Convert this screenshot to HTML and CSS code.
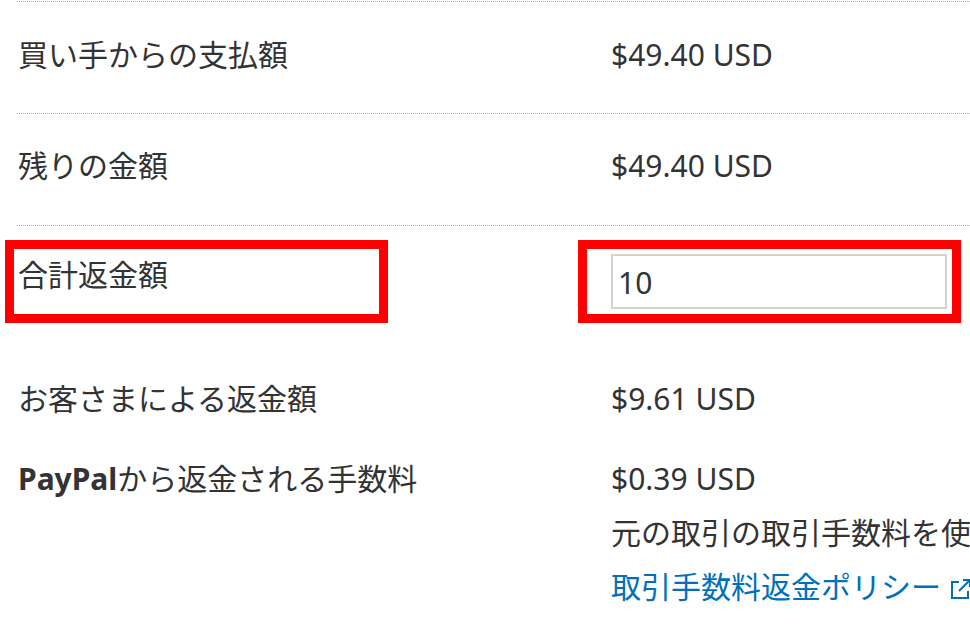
FILE: index.html
```html
<!DOCTYPE html>
<html lang="ja">
<head>
<meta charset="utf-8">
<title>返金</title>
<link rel="stylesheet" href="styles.css">
</head>
<body>
<div class="sheet">
  <div class="rule"></div>
  <div class="row tall tall-first">
    <div class="label">買い手からの支払額</div>
    <div class="value">$49.40 USD</div>
  </div>
  <div class="rule"></div>
  <div class="row tall">
    <div class="label">残りの金額</div>
    <div class="value">$49.40 USD</div>
  </div>
  <div class="rule"></div>
  <div class="row focus">
    <div class="mark mark-label"><span class="label">合計返金額</span></div>
    <div class="mark mark-value"><input class="amount" type="text" value="10"></div>
  </div>
  <div class="row plain first">
    <div class="label">お客さまによる返金額</div>
    <div class="value">$9.61 USD</div>
  </div>
  <div class="row plain">
    <div class="label"><b>PayPal</b>から返金される手数料</div>
    <div class="value clip">
      <p>$0.39 USD</p>
      <p>元の取引の取引手数料を使用して返金額が計算されます。</p>
      <p><a class="link" href="#">取引手数料返金ポリシー <svg class="ext" width="24" height="24" viewBox="0 0 24 24" fill="none" stroke="#0070ba" stroke-width="2"><path d="M10 5H3v16h16v-7"/><path d="M10 14L21 3"/><path d="M14 3h7v7"/></svg></a></p>
    </div>
  </div>
</div>
</body>
</html>
```
FILE: styles.css
```css
html, body {
  margin: 0;
  padding: 0;
  width: 970px;
  height: 642px;
  overflow: hidden;
  background: #ffffff;
}

body {
  font-family: "Noto Sans", "Noto Sans CJK JP", sans-serif;
  font-size: 30px;
  color: #333333;
}

.sheet {
  padding-top: 1px;
}

.rule {
  margin-left: 17px;
  border-top: 1px dotted #b4b4b4;
}

.row {
  display: flex;
  white-space: nowrap;
}

.tall {
  box-sizing: border-box;
  height: 111px;
  padding-top: 32px;
  padding-left: 18px;
  line-height: 40px;
}

.tall-first {
  padding-top: 33px;
}

.tall .label,
.plain .label {
  width: 593px;
  flex: none;
}

.focus {
  padding-top: 14px;
  align-items: flex-start;
}

.mark {
  box-sizing: border-box;
  height: 83px;
  width: 383px;
  border: 9px solid #ff0000;
  padding-top: 5px;
}

.mark-label {
  margin-left: 5px;
  padding-left: 4px;
  line-height: 40px;
}

.mark-label .label {
  display: block;
  margin-top: 1px;
}

.mark-value {
  margin-left: 190px;
  padding-left: 24px;
}

.amount {
  box-sizing: border-box;
  width: 336px;
  height: 55px;
  margin: 0;
  border: 2px solid #d2d2d2;
  border-radius: 0;
  padding: 2px 0 0 5px;
  font-family: "Noto Sans", sans-serif;
  font-size: 30px;
  color: #333333;
  background: #ffffff;
  outline: none;
}

.plain {
  padding-left: 18px;
  line-height: 54px;
}

.first {
  margin-top: 49px;
}

.plain + .plain {
  margin-top: 26px;
}

.clip {
  width: 359px;
  overflow: hidden;
}

.label b {
  font-weight: 700;
}

.value p {
  margin: 0;
}

.link {
  color: #0070ba;
  text-decoration: none;
}

.ext {
  vertical-align: -3px;
}
```
